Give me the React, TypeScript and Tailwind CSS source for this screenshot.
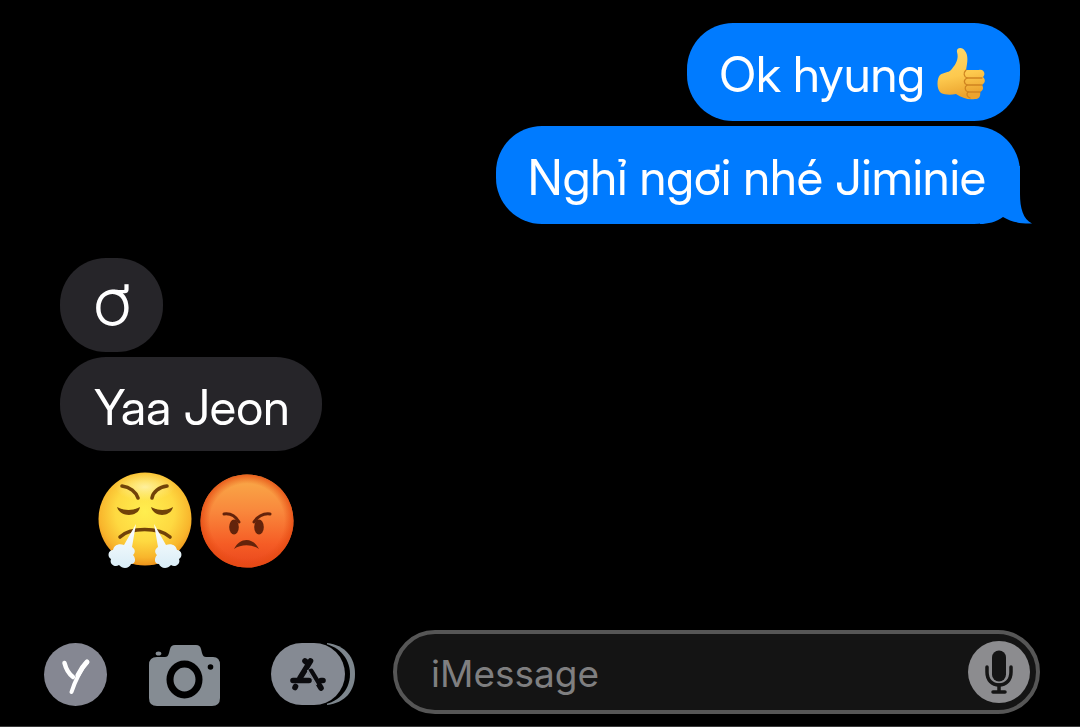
import type { ReactNode } from 'react';

type Side = 'sent' | 'received';

interface BubbleProps {
  side: Side;
  tail?: boolean;
  children: ReactNode;
}

function Bubble({ side, tail = false, children }: BubbleProps) {
  return (
    <li
      className={
        side === 'sent'
          ? 'relative flex h-[98px] items-center self-end rounded-[46px] bg-[#007bff] pt-[6px] pr-[34px] pl-8'
          : 'flex h-[94px] items-center self-start rounded-[46px] bg-[#262529] pt-2 pr-8 pl-[34px]'
      }
    >
      {tail && <BubbleTail />}
      <p className="relative flex items-center gap-3 text-[49px] leading-[60px] whitespace-nowrap">{children}</p>
    </li>
  );
}

function BubbleTail() {
  return (
    <svg
      className="absolute -right-3 bottom-0 h-[58px] w-[52px]"
      viewBox="0 0 52 58"
      fill="#007bff"
      aria-hidden="true"
    >
      <path d="M0 0H40V28C40 42 43 53 52 57.5C42 58 31 56 23 51C16 56 8 58 0 58Z" />
    </svg>
  );
}

function ThumbsUp() {
  return (
    <svg className="h-[54px] w-[49px]" viewBox="0 0 49 54" role="img" aria-label="Thumbs up">
      <defs>
        <linearGradient id="thumb" x1="0" y1="0" x2="0.2" y2="1">
          <stop offset="0" stopColor="#ffd96c" />
          <stop offset="0.6" stopColor="#fdc94e" />
          <stop offset="1" stopColor="#eba32e" />
        </linearGradient>
      </defs>
      <path
        d="M20 4C19 -1 26 -1 28 3C32 8 30 16 29 22H42C47 21 49 26 46 29C49 32 48 35 45 37C47 40 46 43 43 44C44 48 42 51 38 51C31 52 25 50 19 46C14 47 8 47 4 45C-1 41 0 30 3 27C7 24 11 25 14 22C19 16 22 11 20 4Z"
        fill="url(#thumb)"
      />
      <g fill="none" stroke="#cf8420" strokeWidth="1.3" strokeLinecap="round">
        <path d="M29 22C26 25 27 29 30 30H45" />
        <path d="M30 30C26 32 27 36 30 37H45" />
        <path d="M30 37C27 39 28 43 31 44H43" />
        <path d="M31 44C29 46 30 49 33 50" />
      </g>
    </svg>
  );
}

function SteamFace() {
  return (
    <svg className="h-[98px] w-[94px]" viewBox="0 0 94 98" role="img" aria-label="Face with steam from nose">
      <defs>
        <radialGradient id="yellow" cx="0.5" cy="0.42" r="0.58">
          <stop offset="0" stopColor="#ffee4f" />
          <stop offset="0.55" stopColor="#fed941" />
          <stop offset="0.85" stopColor="#f8b52c" />
          <stop offset="1" stopColor="#ee941b" />
        </radialGradient>
        <linearGradient id="steam" x1="0" y1="0" x2="0" y2="1">
          <stop offset="0" stopColor="#ffffff" />
          <stop offset="1" stopColor="#d9edf7" />
        </linearGradient>
        <radialGradient id="shine">
          <stop offset="0" stopColor="#fff8c4" stopOpacity="0.7" />
          <stop offset="1" stopColor="#fff3a5" stopOpacity="0" />
        </radialGradient>
      </defs>
      <circle cx="47" cy="47" r="46.5" fill="url(#yellow)" />
      <ellipse cx="47" cy="15" rx="30" ry="14" fill="url(#shine)" />
      <g fill="none" stroke="#714209" strokeWidth="3.6" strokeLinecap="round">
        <path d="M24 14C32 15 38 20 40 26" />
        <path d="M69 14C61 15 55 20 54 26" />
        <path d="M22 65C32 55 61 55 72 65" />
      </g>
      <g fill="#714209">
        <path d="M19 35C26 39 35 39 42 35C41 45 22 46 19 35Z" />
        <path d="M53 35C60 39 69 39 75 35C73 45 56 46 53 35Z" />
      </g>
      <g fill="url(#steam)">
        <path d="M38 52L26 73C21 71 16 73 15 78C10 78 9 85 13 87C11 92 17 96 21 93C25 98 32 96 33 92C38 92 38 86 35 83C38 80 37 77 34 75Z" />
        <path d="M56 52L68 73C73 71 78 73 79 78C84 78 85 85 81 87C83 92 77 96 73 93C69 98 62 96 61 92C56 92 56 86 59 83C56 80 57 77 60 75Z" />
      </g>
    </svg>
  );
}

function PoutingFace() {
  return (
    <svg className="h-[98px] w-[94px]" viewBox="0 0 94 98" role="img" aria-label="Pouting face">
      <defs>
        <linearGradient id="red" x1="0" y1="0" x2="0" y2="1">
          <stop offset="0" stopColor="#f9ad49" />
          <stop offset="0.4" stopColor="#f9873c" />
          <stop offset="0.75" stopColor="#f55c25" />
          <stop offset="1" stopColor="#e9471d" />
        </linearGradient>
        <radialGradient id="rim">
          <stop offset="0.8" stopColor="#e54a12" stopOpacity="0" />
          <stop offset="1" stopColor="#e54a12" stopOpacity="0.8" />
        </radialGradient>
      </defs>
      <circle cx="47" cy="49" r="46.5" fill="url(#red)" />
      <circle cx="47" cy="49" r="46.5" fill="url(#rim)" />
      <g fill="#63230b">
        <ellipse cx="34" cy="55" rx="4.8" ry="7.5" />
        <ellipse cx="59" cy="55" rx="4.8" ry="7.5" />
        <path d="M34 77C40 65 53 65 59 77C52 72 41 72 34 77Z" />
      </g>
      <g fill="none" stroke="#63230b" strokeWidth="3" strokeLinecap="round">
        <path d="M24 42C31 41 36 45 39 50" />
        <path d="M70 42C63 41 57 45 54 50" />
      </g>
    </svg>
  );
}

function CameraIcon() {
  return (
    <svg className="h-[62px] w-[72px]" viewBox="0 0 72 62" aria-hidden="true">
      <path
        d="M8 12H16C18 12 19 11 20 8L21 4C22 1 23 0 26 0H47C50 0 51 1 52 4L53 8C54 11 55 12 57 12H64Q71 12 71 20V53Q71 61 63 61H8Q0 61 0 53V20Q0 12 8 12Z"
        fill="#858c93"
      />
      <ellipse cx="9.5" cy="8.5" rx="2.8" ry="2" fill="#858c93" />
      <ellipse cx="35.5" cy="34.5" rx="14.5" ry="15.5" fill="none" stroke="#000" strokeWidth="7" />
      <circle cx="61.5" cy="22" r="2.8" fill="#000" />
    </svg>
  );
}

function AppsIcon() {
  return (
    <svg className="h-[62px] w-[86px]" viewBox="0 0 86 62" aria-hidden="true">
      <path d="M56 0C74 2 84 14 84 31S74 60 56 62Z" fill="#7d868d" />
      <path d="M31 0H48C66 1 79 14 79 31S66 61 48 62H31Z" fill="#000" />
      <rect width="74" height="62" rx="31" fill="#858a93" />
      <g fill="none" stroke="#0b0b0e" strokeWidth="5.6" strokeLinecap="round">
        <path d="M34 18L36.5 20" />
        <path d="M39.5 18L29 35" />
        <path d="M22 37.5H38M50 37.5H52" />
        <path d="M40 28.5L50 45" />
        <path d="M24.5 43.5L24 44.5" />
      </g>
      <path d="M36.5 27L45.5 42" stroke="#858a93" strokeWidth="1.5" />
    </svg>
  );
}

function MicIcon() {
  return (
    <svg className="size-[62px]" viewBox="0 0 62 62" aria-hidden="true">
      <circle cx="31" cy="31" r="31" fill="#8c8c8f" />
      <rect x="24" y="9.5" width="14" height="31" rx="7" fill="#151515" />
      <g fill="none" stroke="#151515" strokeWidth="3.5" strokeLinecap="round">
        <path d="M19 26V31C19 39 24 44 31 44S43 39 43 31V26" />
        <path d="M31 44V51M25 51H37" />
      </g>
    </svg>
  );
}

function Composer() {
  return (
    <form
      className="mt-auto flex items-center border-b border-[#3a3a3a] pr-10 pb-3 pl-11"
      onSubmit={(event) => event.preventDefault()}
    >
      <button type="button" aria-label="Profile" className="mt-1">
        <svg className="size-[63px]" viewBox="0 0 63 63" aria-hidden="true">
          <circle cx="31.5" cy="31.5" r="31.5" fill="#858792" />
          <g fill="none" stroke="#fff" strokeLinecap="round">
            <path d="M20.5 20C22 26 25 31 29 34" strokeWidth="4.5" />
            <path d="M43 19C38 24 31 38 27.5 49" strokeWidth="4" />
            <path d="M43 19C40 22 37 26 34 32" strokeWidth="5" />
          </g>
        </svg>
      </button>
      <button type="button" aria-label="Camera" className="mt-2 ml-[42px]">
        <CameraIcon />
      </button>
      <button type="button" aria-label="Apps" className="mt-1 ml-[50px]">
        <AppsIcon />
      </button>
      <div className="ml-9 flex h-[84px] min-w-0 flex-1 items-center rounded-full border-4 border-[#565656] bg-[#141414] pr-[6px] pl-[34px]">
        <input
          type="text"
          aria-label="Message"
          placeholder="iMessage"
          className="min-w-0 flex-1 bg-transparent pt-1 font-['Inter','Liberation_Sans',sans-serif] text-[37px] text-white outline-none placeholder:text-[#7f7f80]"
        />
        <button type="button" aria-label="Dictate" className="shrink-0">
          <MicIcon />
        </button>
      </div>
    </form>
  );
}

export default function App() {
  return (
    <main className="flex min-h-screen flex-col bg-black font-['Inter_Display','Inter','Liberation_Sans',sans-serif] text-white">
      <ul className="flex flex-col gap-[5px] pt-[23px] pr-[60px] pl-[60px]">
        <Bubble side="sent">
          Ok hyung <ThumbsUp />
        </Bubble>
        <Bubble side="sent" tail>
          Nghỉ ngơi nhé Jiminie
        </Bubble>
        <li className="h-6" aria-hidden="true" />
        <Bubble side="received">Ơ</Bubble>
        <Bubble side="received">Yaa Jeon</Bubble>
        <li className="flex gap-2 pt-4 pl-[38px]">
          <SteamFace />
          <PoutingFace />
        </li>
      </ul>
      <Composer />
    </main>
  );
}
